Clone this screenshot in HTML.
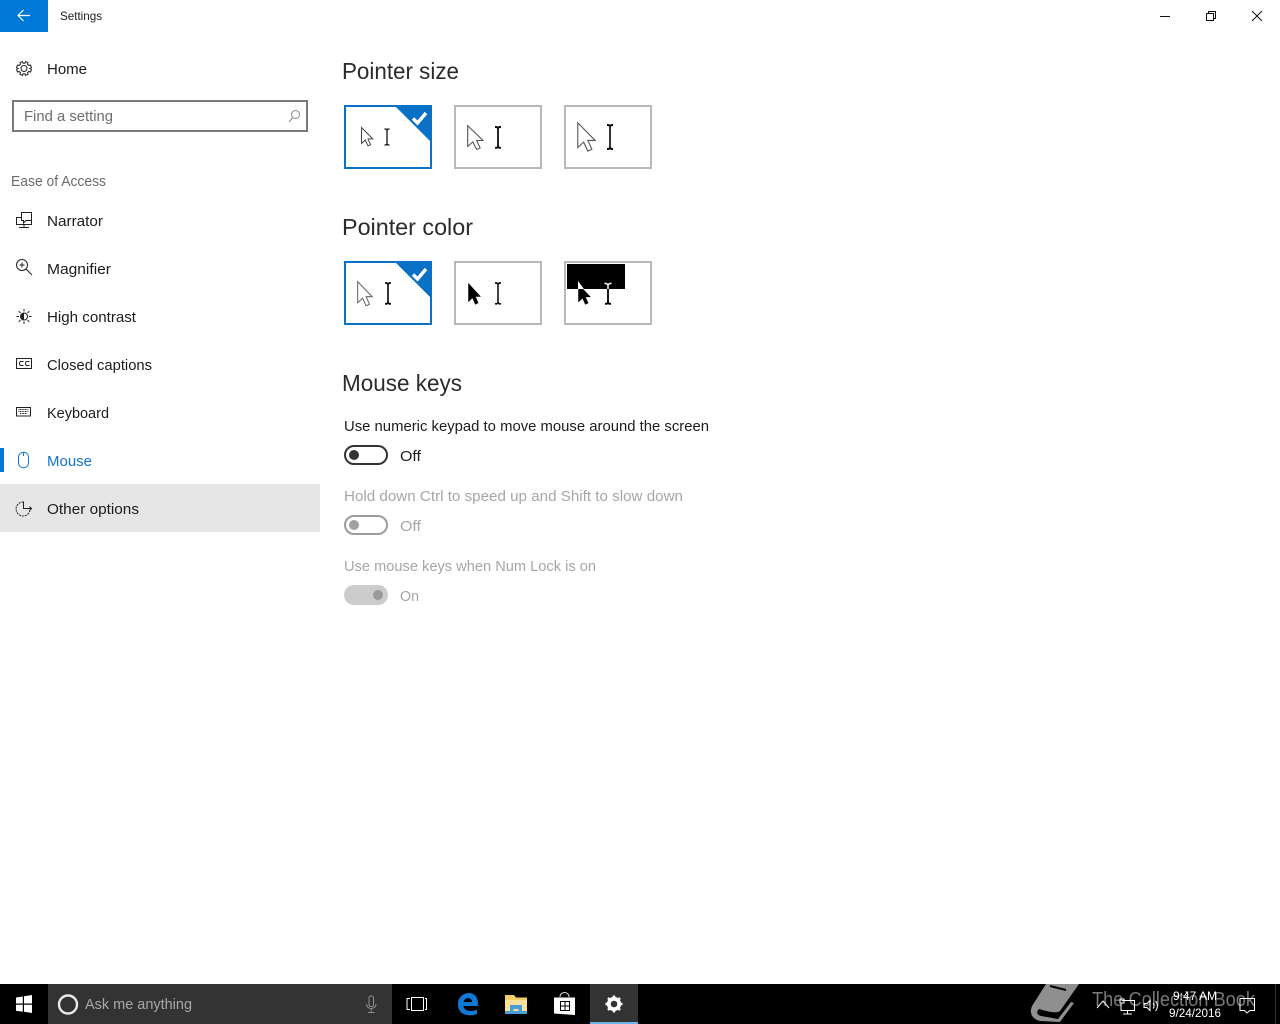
<!DOCTYPE html>
<html><head><meta charset="utf-8"><title>Settings</title>
<style>
html,body{margin:0;padding:0;background:#fff;width:1280px;height:1024px;overflow:hidden}
svg{display:block;position:absolute;left:0;top:0}
text{font-family:"Liberation Sans",sans-serif;font-size:15px;fill:#1c1c1c}
.h{font-size:23px;fill:#2b2b2b}
.d{fill:#a6a6a6}
.i{fill:none;stroke:#222;stroke-width:1}
</style></head><body>
<svg width="1280" height="1024" viewBox="0 0 1280 1024" xmlns="http://www.w3.org/2000/svg">
<defs>
<path id="arr" d="M0.5 0.5V16.5L4.3 13L7 18.8L9.6 17.6L7 11.9H11.7Z"/>
<path id="beam" d="M-2.5 0H-1L0 1L1 0H2.5M0 1V15M-2.5 16H-1L0 15L1 16H2.5"/>
</defs>
<rect width="1280" height="1024" fill="#fff"/>
<!-- title bar -->
<rect width="48" height="32" fill="#0078d7"/>
<path d="M18 15.500H30M23.500 10L18 15.500L23.500 21" fill="none" stroke="#fff" stroke-width="1.200"/>
<text x="60" y="20" style="font-size:12px" textLength="42" lengthAdjust="spacingAndGlyphs">Settings</text>
<path d="M1160 16.500H1170" stroke="#111" fill="none"/>
<path d="M1206.500 13.500H1213.500V20.500H1206.500ZM1208.500 13V11.500H1215.500V18.500H1214" stroke="#111" fill="none"/>
<path d="M1252 11L1262 21M1262 11L1252 21" stroke="#111" fill="none"/>
<!-- sidebar -->
<g class="i"><circle cx="24" cy="68.500" r="3"/><path d="M22.500 61.500L23 63.200H25L25.500 61.500L28 62.500L27.500 64.200L28.800 65.500L30.500 65L31.500 67.500L29.800 68.500L31.500 69.500L30.500 72L28.800 71.500L27.500 72.800L28 74.500L25.500 75.500L25 73.800H23L22.500 75.500L20 74.500L20.500 72.800L19.200 71.500L17.500 72L16.500 69.500L18.200 68.500L16.500 67.500L17.500 65L19.200 65.500L20.500 64.200L20 62.500Z"/></g>
<text x="47" y="74" textLength="40" lengthAdjust="spacingAndGlyphs">Home</text>
<rect x="13" y="101" width="294" height="30" fill="#fff" stroke="#7a7a7a" stroke-width="2"/>
<text x="24" y="121" style="fill:#6e6e6e" textLength="89" lengthAdjust="spacingAndGlyphs">Find a setting</text>
<g fill="none" stroke="#888"><circle cx="295.500" cy="114.500" r="4"/><path d="M292.500 118L289 122"/></g>
<text x="11" y="186" style="fill:#6b6b6b" textLength="95" lengthAdjust="spacingAndGlyphs">Ease of Access</text>

<g class="i"><path d="M21.500 217.500H16.500V224.500H31.500V220.500M24 225V227M19 227.500H29"/><path d="M21.500 212.500H31.500V220.500H26L23.500 223V220.500H21.500Z"/></g>
<text x="47" y="226" textLength="56" lengthAdjust="spacingAndGlyphs">Narrator</text>
<g class="i"><circle cx="22" cy="265" r="5.500"/><path d="M19.500 265H24.500M22 262.500V267.500M26 269L32 275"/></g>
<text x="47" y="274" textLength="64" lengthAdjust="spacingAndGlyphs">Magnifier</text>
<g class="i"><circle cx="24" cy="316.500" r="3.500"/><path d="M24 309V311.500M24 321.500V324M16.500 316.500H19M29 316.500H31.500M18.700 311.200L20.500 313M27.500 320L29.300 321.800M18.700 321.800L20.500 320M27.500 313L29.300 311.200"/></g>
<path d="M24 313V320A3.500 3.500 0 0 1 24 313Z" fill="#222"/>
<text x="47" y="322" textLength="89" lengthAdjust="spacingAndGlyphs">High contrast</text>
<g class="i"><rect x="16.500" y="358.500" width="15" height="10"/><path d="M23.500 361.500H21C19 361.500 19 365.500 21 365.500H23.500M29.500 361.500H27C25 361.500 25 365.500 27 365.500H29.500"/></g>
<text x="47" y="370" textLength="105" lengthAdjust="spacingAndGlyphs">Closed captions</text>
<g class="i"><rect x="16.500" y="407.500" width="14" height="8.500"/></g>
<path d="M18.500 409.500H28.500M18.500 411.500H28.500M20 413.500H27" stroke="#222" stroke-dasharray="1 .6" fill="none"/>
<text x="47" y="418" textLength="62" lengthAdjust="spacingAndGlyphs">Keyboard</text>
<rect y="448" width="4" height="24" fill="#0078d7"/>
<path d="M18.500 457.500C18.500 450.500 28.500 450.500 28.500 457.500V462.500C28.500 469.500 18.500 469.500 18.500 462.500ZM23.500 452.500V456" fill="none" stroke="#0f76c9"/>
<text x="47" y="466" style="fill:#0f76c9" textLength="45" lengthAdjust="spacingAndGlyphs">Mouse</text>
<rect y="484" width="320" height="48" fill="#e6e6e6"/>
<g class="i"><path d="M23.500 502A7 7 0 1 0 30 510" stroke-dasharray="2 1"/><path d="M23.500 501.500V508.500H31.500M29.500 506.500L31.500 508.500L29.500 510.500"/></g>
<text x="47" y="514" textLength="92" lengthAdjust="spacingAndGlyphs">Other options</text>

<!-- Pointer size -->
<text class="h" x="342" y="79" textLength="117" lengthAdjust="spacingAndGlyphs">Pointer size</text>
<rect x="345" y="106" width="86" height="62" fill="#fff" stroke="#0a72c6" stroke-width="2"/>
<path d="M394 105H432V143Z" fill="#0a72c6"/>
<path d="M413 118.500L417.500 123L426 113" fill="none" stroke="#fff" stroke-width="3.400"/>
<rect x="455" y="106" width="86" height="62" fill="#fff" stroke="#b8b8b8" stroke-width="2"/>
<rect x="565" y="106" width="86" height="62" fill="#fff" stroke="#b8b8b8" stroke-width="2"/>
<use href="#arr" transform="translate(361 127)" fill="#fff" stroke="#444" stroke-width="1"/>
<use href="#beam" transform="translate(387 129)" fill="none" stroke="#111" stroke-width="1.300"/>
<use href="#arr" transform="translate(467 125) scale(1.370 1.300)" fill="#fff" stroke="#555" stroke-width=".8"/>
<use href="#beam" transform="translate(498 127) scale(1.200 1.300)" fill="none" stroke="#111" stroke-width="1.500"/>
<use href="#arr" transform="translate(577 122) scale(1.550 1.550)" fill="#fff" stroke="#555" stroke-width=".7"/>
<use href="#beam" transform="translate(610 125) scale(1.200 1.500)" fill="none" stroke="#111" stroke-width="1.400"/>

<!-- Pointer color -->
<text class="h" x="342" y="235" textLength="131" lengthAdjust="spacingAndGlyphs">Pointer color</text>
<rect x="345" y="262" width="86" height="62" fill="#fff" stroke="#0a72c6" stroke-width="2"/>
<path d="M394 261H432V299Z" fill="#0a72c6"/>
<path d="M413 274.500L417.500 279L426 269" fill="none" stroke="#fff" stroke-width="3.400"/>
<rect x="455" y="262" width="86" height="62" fill="#fff" stroke="#b8b8b8" stroke-width="2"/>
<rect x="565" y="262" width="86" height="62" fill="#fff" stroke="#b8b8b8" stroke-width="2"/>
<use href="#arr" transform="translate(357 281) scale(1.300 1.320)" fill="#fff" stroke="#666" stroke-width=".8"/>
<use href="#beam" transform="translate(388 283) scale(1.200 1.300)" fill="none" stroke="#111" stroke-width="1.400"/>
<use href="#arr" transform="translate(468 283) scale(1.050 1.130)" fill="#000" stroke="#000" stroke-width=".5"/>
<use href="#beam" transform="translate(498 283) scale(1.200 1.300)" fill="none" stroke="#111" stroke-width="1.300"/>
<rect x="567" y="264" width="58" height="25" fill="#000"/>
<use href="#arr" transform="translate(578 284) scale(1.050 1.080)" fill="#000" stroke="#000" stroke-width=".5"/>
<path d="M578 281V289H584Z" fill="#fff"/>
<use href="#beam" transform="translate(608 283) scale(1.200 1.300)" fill="none" stroke="#000" stroke-width="1.500"/>
<path d="M604.500 283.500H606.500L608 285L609.500 283.500H611.500M608 285V289" fill="none" stroke="#fff" stroke-width="1.500"/>

<!-- Mouse keys -->
<text class="h" x="342" y="391" textLength="120" lengthAdjust="spacingAndGlyphs">Mouse keys</text>
<text x="344" y="431" textLength="365" lengthAdjust="spacingAndGlyphs">Use numeric keypad to move mouse around the screen</text>
<rect x="345" y="446" width="42" height="18" rx="9" fill="#fff" stroke="#333" stroke-width="2"/>
<circle cx="354" cy="455" r="5" fill="#333"/>
<text x="400" y="461" textLength="21" lengthAdjust="spacingAndGlyphs">Off</text>
<text class="d" x="344" y="501" textLength="339" lengthAdjust="spacingAndGlyphs">Hold down Ctrl to speed up and Shift to slow down</text>
<rect x="345" y="516" width="42" height="18" rx="9" fill="#fff" stroke="#9c9c9c" stroke-width="2"/>
<circle cx="354" cy="525" r="5" fill="#a0a0a0"/>
<text class="d" x="400" y="531" textLength="21" lengthAdjust="spacingAndGlyphs">Off</text>
<text class="d" x="344" y="571" textLength="252" lengthAdjust="spacingAndGlyphs">Use mouse keys when Num Lock is on</text>
<rect x="344" y="585" width="44" height="20" rx="10" fill="#cccccc"/>
<circle cx="378" cy="595" r="5" fill="#9a9a9a"/>
<text class="d" x="400" y="601" textLength="19" lengthAdjust="spacingAndGlyphs">On</text>

<!-- taskbar -->
<rect y="984" width="1280" height="40" fill="#000"/>
<path d="M16 997.500L22.800 996.500V1003.500H16ZM24 996.300L32 995V1003.500H24ZM16 1004.700H22.800V1011.700L16 1010.700ZM24 1004.700H32V1013L24 1011.800Z" fill="#fff"/>
<rect x="48" y="984" width="344" height="40" fill="#333"/>
<circle cx="68" cy="1004.500" r="9" fill="none" stroke="#e8e8e8" stroke-width="2.400"/>
<text x="85" y="1009" style="fill:#a8a8a8" textLength="107" lengthAdjust="spacingAndGlyphs">Ask me anything</text>
<path d="M369 997.500C369 995.500 373.500 995.500 373.500 997.500V1005C373.500 1007 369 1007 369 1005ZM366.500 1004C366.500 1010 376 1010 376 1004M371.200 1008V1012M368 1012.500H374.500" fill="none" stroke="#8f8f8f"/>
<path d="M410 998.500H407V1009.500H410M411.500 997.500H423.500V1010.500H411.500ZM425 998.500H426.500V1009.500H425" fill="none" stroke="#fff"/>
<!-- edge -->
<path d="M458 1003C459 994 468 992 472 993.500C477 995 478.500 1001 478 1006H463.500C464 1011 471 1012.500 477 1009.500V1014C469 1017 459 1015 458 1006ZM463.500 1002H472C472 997 464.500 997 463.500 1002Z" fill="#0f78d4"/>
<!-- folder -->
<path d="M505 995H514L516 997.500H527V1002H505Z" fill="#f2cd6b"/>
<path d="M505 1000H527V1014H505Z" fill="#fbe29a"/>
<path d="M505 1011H527V1014H505Z" fill="#4a9ed6"/>
<path d="M510 1005H522V1013H518.500V1009H513.500V1013H510Z" fill="#4a9ed6"/>
<!-- store -->
<path d="M554 997.500H575V1015L554 1013.500Z" fill="#fff"/>
<path d="M560 997C560 991 569 991 569 997" fill="none" stroke="#ddd"/>
<path d="M560.500 1001.500H569.500V1010.500H560.500ZM565 1001.500V1010.500M560.500 1006H569.500" fill="none" stroke="#000"/>
<!-- settings -->
<rect x="590" y="984" width="48" height="40" fill="#333"/>
<rect x="590" y="1022" width="48" height="2" fill="#6db3e8"/>
<circle cx="614" cy="1004" r="5.200" fill="none" stroke="#fff" stroke-width="3.800"/>
<path d="M614 995.500V999M614 1009V1012.500M605.500 1004H609M619 1004H622.500M608 998L610.500 1000.500M617.500 1007.500L620 1010M608 1010L610.500 1007.500M617.500 1000.500L620 998" stroke="#fff" stroke-width="2.400" fill="none"/>
<!-- watermark -->
<path d="M1046 984H1079L1060 1011C1056 1014 1046 1011 1039 1009C1036 1012 1037 1015 1041 1016L1058 1019L1071 1002L1074 1003L1060 1022L1040 1021C1032 1019 1029 1013 1032 1006Z" fill="#8f8f8f"/>
<path d="M1050 986L1066 990" stroke="#000" stroke-width="2" fill="none"/>
<text x="1092" y="1006" style="font-size:20px;fill:#777" textLength="163" lengthAdjust="spacingAndGlyphs">The Collection Book</text>
<!-- tray -->
<path d="M1097 1008L1103 1001L1109 1008" fill="none" stroke="#fff"/>
<path d="M1122 1000.500H1134.500V1010.500H1121V1004M1127.500 1010.500V1013.500M1123 1014H1132" fill="none" stroke="#fff"/>
<rect x="1120" y="999" width="4" height="4" fill="none" stroke="#fff"/>
<path d="M1144 1003.500H1147L1150 1000.500V1010.500L1147 1007.500H1144ZM1153 1003C1154.500 1004.500 1154.500 1007 1153 1008.500M1155.500 1001C1158 1004 1158 1008 1155.500 1011" fill="none" stroke="#fff"/>
<text x="1173" y="1000" style="font-size:12px;fill:#fff" textLength="44" lengthAdjust="spacingAndGlyphs">9:47 AM</text>
<text x="1169" y="1017" style="font-size:12px;fill:#fff" textLength="52" lengthAdjust="spacingAndGlyphs">9/24/2016</text>
<path d="M1240 998.500H1254.500V1010.500H1250L1247 1013L1244.500 1010.500H1240Z" fill="none" stroke="#fff"/>
<rect x="1275" y="984" width="1" height="40" fill="#333"/>
</svg>
</body></html>
